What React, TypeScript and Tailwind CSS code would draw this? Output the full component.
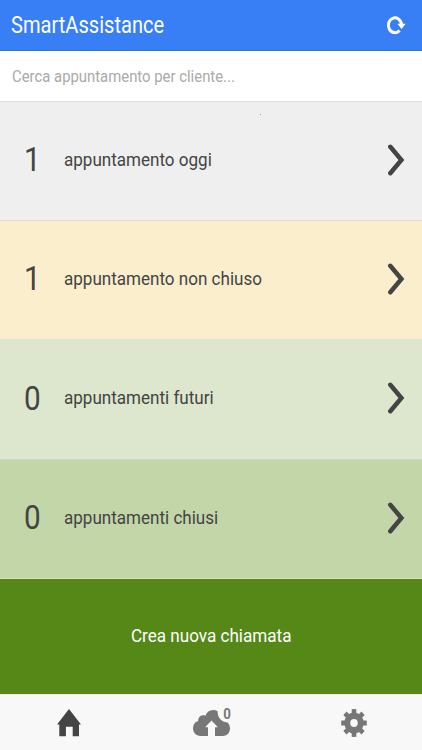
import clsx from "clsx";

type Section = {
    count: number;
    label: string;
    className: string;
};

const sections: Section[] = [
    { count: 1, label: "appuntamento oggi", className: "h-[119px] bg-[#efefef] border-[#dcdcdc]" },
    { count: 1, label: "appuntamento non chiuso", className: "h-[119px] bg-[#fbeecd] border-[#e3e2d0]" },
    { count: 0, label: "appuntamenti futuri", className: "h-[120px] bg-[#dde7cd] border-[#d2d9cb]" },
    { count: 0, label: "appuntamenti chiusi", className: "h-[119px] bg-[#c3d6a8] border-[#d3e1bf]" },
];

function RefreshIcon() {
    return (
        <svg width="20" height="20" viewBox="0 0 20 20" className="text-white">
            <path d="M13.600 15.500A6.600 7.400 0 1 1 15.500 9.300" fill="none" stroke="currentColor" strokeWidth="3" />
            <path d="M11.400 8.700h8.400l-4.300 5.200z" fill="currentColor" />
        </svg>
    );
}

function ChevronIcon() {
    return (
        <svg width="18" height="32" viewBox="0 0 18 32" className="text-[#444]">
            <path
                d="M3.300 2.800 14.400 16 3.300 29.200"
                fill="none"
                stroke="currentColor"
                strokeWidth="4.500"
                strokeLinecap="round"
            />
        </svg>
    );
}

function HomeIcon() {
    return (
        <svg width="24" height="28" viewBox="0 0 24 28" className="text-[#444]">
            <path d="M12 0 24 15.500h-2v11.800h-6.300v-9.600H8.900v9.600H2.300V15.500H0z" fill="currentColor" />
        </svg>
    );
}

function UploadIcon() {
    return (
        <svg width="37" height="27" viewBox="0 0 37 27" className="text-[#777]">
            <path
                d="M20 0c1.700 0 3.300.4 4.700 1.200C24.300 6.500 27.500 11.800 34.500 12.500 36 13.900 37 16 37 18.500 37 23 33.800 26 29.800 26H22v-8.700h2.900L18.500 10.500l-6.400 6.800h2.900V26H7.500C3.200 26 0 22.700 0 18.300 0 14.500 2 11.900 5.100 11c.2-4.300 3.400-6.600 7.300-5.300C13.800 2.200 16.500 0 20 0z"
                fill="currentColor"
            />
        </svg>
    );
}

function GearIcon() {
    return (
        <svg width="26" height="28" viewBox="-13 -14 26 28" className="text-[#777]">
            <g fill="currentColor" transform="scale(.92 1)">
                <path
                    fillRule="evenodd"
                    d="M0-10.500A10.500 10.500 0 1 1 0 10.500 10.500 10.500 0 0 1 0-10.500zM0-4.100A4.100 4.100 0 1 0 0 4.100 4.100 4.100 0 0 0 0-4.100z"
                />
                {[0, 45, 90, 135, 180, 225, 270, 315].map((angle) => (
                    <path key={angle} d="M-2.500-9.500v-4.400h5v4.400z" transform={`rotate(${angle})`} />
                ))}
            </g>
        </svg>
    );
}

export default function App() {
    return (
        <div className="flex h-[750px] w-[422px] flex-col overflow-hidden bg-white font-[Roboto,sans-serif] text-[#444]">
            <header className="flex h-[51px] items-center justify-between border-b border-[#3272e0] bg-[#387ef5] pr-[16px] pl-[11px]">
                <h1 className="origin-left scale-x-[0.873] whitespace-nowrap text-[23px] leading-none text-white">
                    SmartAssistance
                </h1>
                <button type="button" aria-label="Aggiorna">
                    <RefreshIcon />
                </button>
            </header>

            <div className="flex h-[51px] items-center border-b border-[#ddd] pt-[2px] pl-[12px]">
                <input
                    type="search"
                    placeholder="Cerca appuntamento per cliente..."
                    className="w-[390px] origin-left scale-x-[0.875] text-[17px] outline-none placeholder:text-[#aaa]"
                />
            </div>

            <main className="relative">
                <span className="absolute top-[12px] left-[260px] size-px bg-[#999]" />
                {sections.map((section) => (
                    <button
                        key={section.label}
                        type="button"
                        className={clsx("flex w-full items-center border-b pr-[17px] pb-[3px] text-left", section.className)}
                    >
                        <span className="w-[64px] text-center text-[33px] leading-none">
                            <span className="inline-block scale-x-[0.9]">{section.count}</span>
                        </span>
                        <span className="origin-left scale-x-[0.897] whitespace-nowrap pt-px text-[19px]">
                            {section.label}
                        </span>
                        <span className="ml-auto">
                            <ChevronIcon />
                        </span>
                    </button>
                ))}
            </main>

            <button type="button" className="flex h-[115px] w-full items-center justify-center bg-[#558817] text-white">
                <span className="scale-x-[0.9] text-[19px]">Crea nuova chiamata</span>
            </button>

            <nav className="flex h-[56px] items-center border-t border-[#e4eadc] bg-[#f8f8f8] pt-px">
                <div className="flex w-[137px] justify-center">
                    <HomeIcon />
                </div>
                <div className="flex w-[148px] justify-center">
                    <div className="relative">
                        <UploadIcon />
                        <span className="absolute -top-[3px] left-[30px] scale-x-[0.95] text-[14px] leading-none font-bold text-[#777]">
                            0
                        </span>
                    </div>
                </div>
                <div className="flex w-[137px] justify-center">
                    <GearIcon />
                </div>
            </nav>
        </div>
    );
}
